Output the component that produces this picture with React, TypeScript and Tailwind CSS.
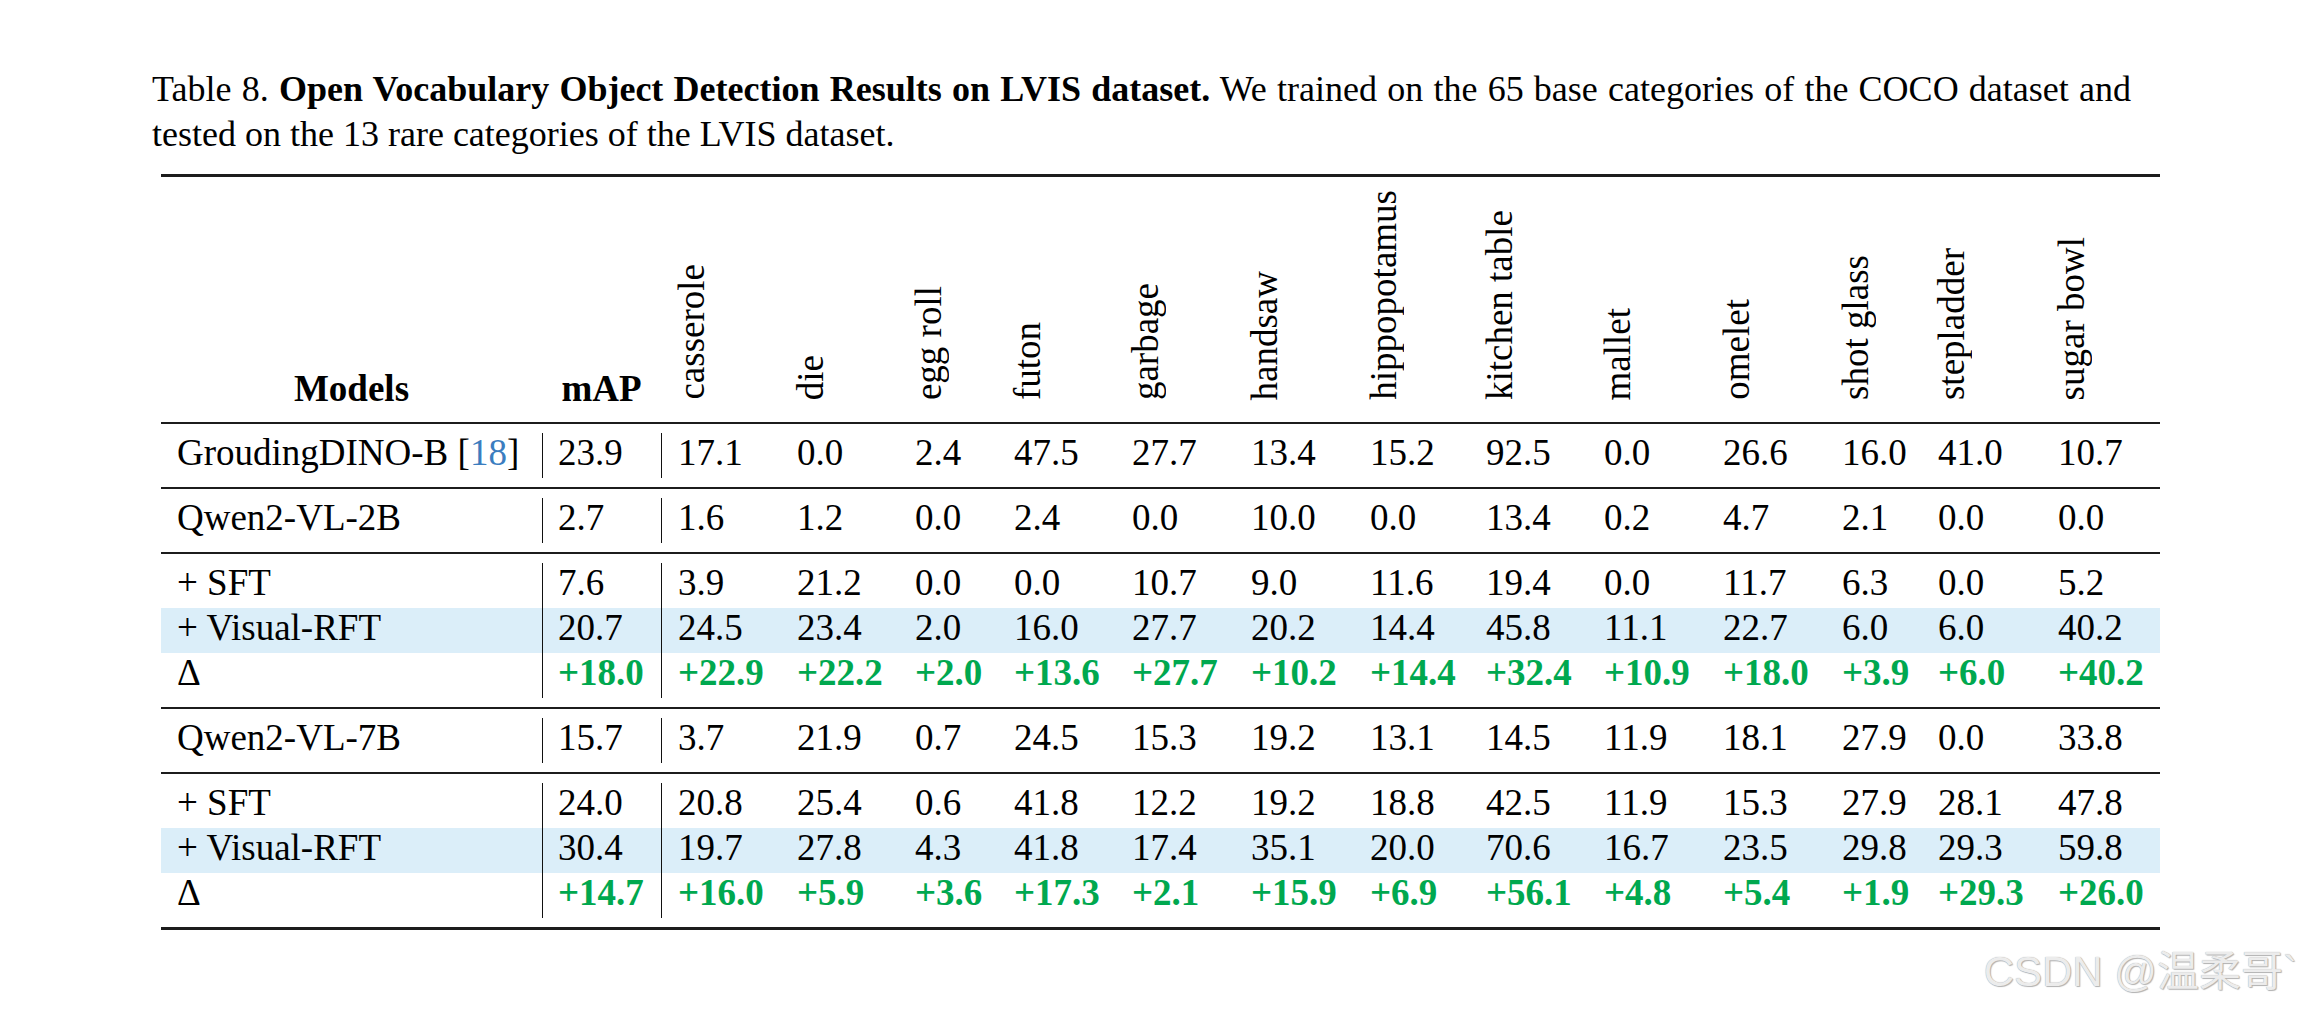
import React from "react";
import clsx from "clsx";

type Row = {
  name: React.ReactNode;
  map: string;
  vals: string[];
  kind?: "rft" | "delta";
};

const COLS =
  "grid grid-cols-[381px_119px_119px_118px_99px_118px_119px_119px_116px_118px_119px_119px_96px_120px_119px]";

const CATS = [
  "casserole",
  "die",
  "egg roll",
  "futon",
  "garbage",
  "handsaw",
  "hippopotamus",
  "kitchen table",
  "mallet",
  "omelet",
  "shot glass",
  "stepladder",
  "sugar bowl"
];

const GROUPS: Row[][] = [
  [
    {
      name: (
        <>
          GroudingDINO-B [<span className="text-[#3b7dbf]">18</span>]
        </>
      ),
      map: "23.9",
      vals: ["17.1", "0.0", "2.4", "47.5", "27.7", "13.4", "15.2", "92.5", "0.0", "26.6", "16.0", "41.0", "10.7"]
    }
  ],
  [
    {
      name: "Qwen2-VL-2B",
      map: "2.7",
      vals: ["1.6", "1.2", "0.0", "2.4", "0.0", "10.0", "0.0", "13.4", "0.2", "4.7", "2.1", "0.0", "0.0"]
    }
  ],
  [
    {
      name: "+ SFT",
      map: "7.6",
      vals: ["3.9", "21.2", "0.0", "0.0", "10.7", "9.0", "11.6", "19.4", "0.0", "11.7", "6.3", "0.0", "5.2"]
    },
    {
      name: "+ Visual-RFT",
      map: "20.7",
      vals: ["24.5", "23.4", "2.0", "16.0", "27.7", "20.2", "14.4", "45.8", "11.1", "22.7", "6.0", "6.0", "40.2"],
      kind: "rft"
    },
    {
      name: "Δ",
      map: "+18.0",
      vals: ["+22.9", "+22.2", "+2.0", "+13.6", "+27.7", "+10.2", "+14.4", "+32.4", "+10.9", "+18.0", "+3.9", "+6.0", "+40.2"],
      kind: "delta"
    }
  ],
  [
    {
      name: "Qwen2-VL-7B",
      map: "15.7",
      vals: ["3.7", "21.9", "0.7", "24.5", "15.3", "19.2", "13.1", "14.5", "11.9", "18.1", "27.9", "0.0", "33.8"]
    }
  ],
  [
    {
      name: "+ SFT",
      map: "24.0",
      vals: ["20.8", "25.4", "0.6", "41.8", "12.2", "19.2", "18.8", "42.5", "11.9", "15.3", "27.9", "28.1", "47.8"]
    },
    {
      name: "+ Visual-RFT",
      map: "30.4",
      vals: ["19.7", "27.8", "4.3", "41.8", "17.4", "35.1", "20.0", "70.6", "16.7", "23.5", "29.8", "29.3", "59.8"],
      kind: "rft"
    },
    {
      name: "Δ",
      map: "+14.7",
      vals: ["+16.0", "+5.9", "+3.6", "+17.3", "+2.1", "+15.9", "+6.9", "+56.1", "+4.8", "+5.4", "+1.9", "+29.3", "+26.0"],
      kind: "delta"
    }
  ]
];

const TableRow = ({ row }: { row: Row }) => {
  const num = row.kind === "delta" ? "font-bold text-[#00a84f]" : "";
  return (
    <div className={clsx(COLS, "h-[45px] leading-[39px]", row.kind === "rft" && "bg-[#dbeef9]")}>
      <div className="pl-[16px] whitespace-nowrap">{row.name}</div>
      <div className={clsx("border-l border-[#111] pl-[15px]", num)}>{row.map}</div>
      {row.vals.map((v, i) => (
        <div key={i} className={clsx(i === 0 ? "border-l border-[#111] pl-[16px]" : "pl-[17px]", num)}>
          {v}
        </div>
      ))}
    </div>
  );
};

const Rule = ({ thick }: { thick?: boolean }) => (
  <div className={clsx("bg-[#1c1c1c]", thick ? "h-[3px]" : "h-[2px]")} />
);

const App = () => {
  return (
    <div className="relative h-[1015px] w-full overflow-hidden bg-white font-['Liberation_Serif','Times_New_Roman',serif] text-[37px] text-black">
      <div className="pl-[152px] pt-[67px] text-[36px] leading-[45px]">
        <div className="w-[1979px] text-justify [text-align-last:justify]">
          Table 8. <span className="font-bold">Open Vocabulary Object Detection Results on LVIS dataset.</span>{" "}
          We trained on the 65 base categories of the COCO dataset and
        </div>
        <div>tested on the 13 rare categories of the LVIS dataset.</div>
      </div>

      <div className="ml-[161px] mt-[17px] w-[1999px]">
        <Rule thick />
        <div className={clsx(COLS, "h-[245px] items-end")}>
          <div className="pb-[13px] text-center font-bold leading-[41px]">Models</div>
          <div className="pb-[13px] text-center font-bold leading-[41px]">mAP</div>
          {CATS.map((c) => (
            <div key={c} className="flex items-end pb-[22px] pl-[10px]">
              <span className="block rotate-180 whitespace-nowrap leading-[41px] [writing-mode:vertical-rl]">{c}</span>
            </div>
          ))}
        </div>
        {GROUPS.map((g, gi) => (
          <React.Fragment key={gi}>
            <Rule />
            <div className="py-[9px]">
              {g.map((r, ri) => (
                <TableRow key={ri} row={r} />
              ))}
            </div>
          </React.Fragment>
        ))}
        <Rule thick />
      </div>

      <div className="absolute right-[14px] top-[951px] whitespace-nowrap font-['Liberation_Sans','Noto_Sans_CJK_SC',sans-serif] text-[42px] leading-none text-[#ececec] [text-shadow:0_0_1px_#9c9c9c,1px_1px_1px_#b4b4b4]">
        CSDN @温柔哥`
      </div>
    </div>
  );
};

export default App;
